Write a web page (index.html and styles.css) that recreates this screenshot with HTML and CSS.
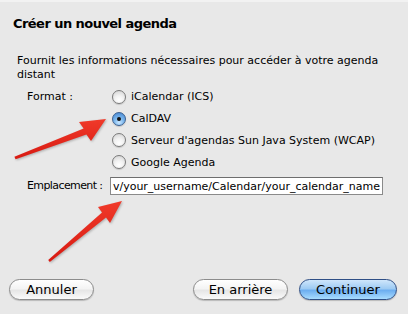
FILE: index.html
```html
<!DOCTYPE html>
<html lang="fr">
<head>
<meta charset="utf-8">
<link rel="stylesheet" href="styles.css">
</head>
<body>
<div class="dialog">
  <div class="topline"></div>
  <h1 class="title">Créer un nouvel agenda</h1>
  <p class="desc">Fournit les informations nécessaires pour accéder à votre agenda distant</p>
  <div class="form">
    <div class="label">Format :</div>
    <div class="radios">
      <label class="radio"><span class="dot"></span>iCalendar (ICS)</label>
      <label class="radio"><span class="dot on"></span>CalDAV</label>
      <label class="radio"><span class="dot"></span>Serveur d'agendas Sun Java System (WCAP)</label>
      <label class="radio"><span class="dot"></span>Google Agenda</label>
    </div>
    <div class="label label-field">Emplacement :</div>
    <div class="field"><span class="field-text">v/your_username/Calendar/your_calendar_name</span></div>
  </div>
  <div class="spacer"></div>
  <div class="buttons">
    <button class="btn btn-cancel">Annuler</button>
    <div class="grow"></div>
    <button class="btn btn-back">En arrière</button>
    <button class="btn btn-primary">Continuer</button>
  </div>
  <svg class="arrows" width="408" height="314" viewBox="0 0 408 314">
    <defs>
      <linearGradient id="red" x1="0" y1="0" x2="0" y2="1">
        <stop offset="0" stop-color="#f03a2a"/>
        <stop offset="1" stop-color="#d81a12"/>
      </linearGradient>
    </defs>
    <polygon fill="url(#red)" points="14.4,156.8 83.6,128.6 79,122 106,119 91,141 86.4,134.4 15.6,159.2"/>
    <polygon fill="url(#red)" points="48.2,260 102,212.6 98,207 122,201 110,223 106,217.4 49.8,262"/>
  </svg>
</div>
</body>
</html>
```

FILE: styles.css
```css
html, body {
  margin: 0;
  padding: 0;
}
body {
  background: #e8e8e8;
  font-family: "DejaVu Sans", "Liberation Sans", sans-serif;
  font-size: 11px;
  color: #000;
}
.dialog {
  position: relative;
  width: 408px;
  height: 314px;
  display: flex;
  flex-direction: column;
  box-sizing: border-box;
  overflow: hidden;
}
.topline {
  height: 2px;
  background: #f2f2f2;
}
.title {
  margin: 14px 0 0 13px;
  font-size: 13px;
  font-weight: bold;
  letter-spacing: -0.55px;
  line-height: 16px;
}
.desc {
  margin: 22px 0 0 17px;
  width: 370px;
  line-height: 14px;
}
.form {
  display: grid;
  grid-template-columns: 83px 1fr;
  margin: 7px 0 0 27px;
  width: 356px;
}
.label {
  line-height: 14px;
  padding-top: 1px;
  white-space: nowrap;
}
.radios {
  display: flex;
  flex-direction: column;
}
.radio {
  display: flex;
  align-items: center;
  height: 21.8px;
  gap: 5px;
  margin-left: 2px;
}
.radios .radio:first-child {
  margin-top: -3px;
}
.dot {
  width: 14px;
  height: 14px;
  border-radius: 50%;
  box-sizing: border-box;
  border: 1px solid #7a7a7a;
  background: radial-gradient(circle at 50% 75%, #ffffff 0%, #f2f2f2 40%, #cfcfcf 100%);
  box-shadow: 0 1px 1px rgba(0,0,0,0.15);
  display: flex;
  align-items: center;
  justify-content: center;
}
.dot.on {
  border-color: #3a5f8f;
  background: radial-gradient(circle at 50% 80%, #c9e6ff 0%, #79b5ec 45%, #3f7fcc 100%);
}
.dot.on::after {
  content: "";
  width: 4px;
  height: 4px;
  border-radius: 50%;
  background: #111;
}
.label-field {
  align-self: center;
  margin-top: 3px;
  letter-spacing: -0.6px;
}
.field {
  margin-top: 4px;
  height: 18px;
  box-sizing: border-box;
  border: 1px solid #8a8a8a;
  border-top-color: #6e6e6e;
  background: #fff;
  display: flex;
  justify-content: flex-end;
  align-items: center;
  overflow: hidden;
  padding-right: 2px;
  white-space: nowrap;
}
.spacer {
  flex: 1;
}
.buttons {
  display: flex;
  align-items: center;
  padding: 0 11px 14px 9px;
  gap: 11px;
}
.grow {
  flex: 1;
}
.btn {
  font-family: inherit;
  font-size: 13px;
  height: 21px;
  border-radius: 11px;
  border: 1px solid #8c8c8c;
  background: linear-gradient(to bottom, #ffffff 0%, #f4f4f4 45%, #e6e6e6 55%, #fafafa 100%);
  box-shadow: 0 1px 1px rgba(0,0,0,0.2);
  padding: 0;
  color: #000;
  line-height: 18px;
}
.btn-cancel { width: 85px; }
.btn-back { width: 95px; }
.btn-primary {
  width: 98px;
  border-color: #2f4f86;
  background: linear-gradient(to bottom, #cfe6fb 0%, #9ecbf3 45%, #6daef0 55%, #a8dcff 100%);
}
.arrows {
  position: absolute;
  left: 0;
  top: 0;
  pointer-events: none;
  filter: drop-shadow(1px 1px 1px rgba(0,0,0,0.25));
}
```
